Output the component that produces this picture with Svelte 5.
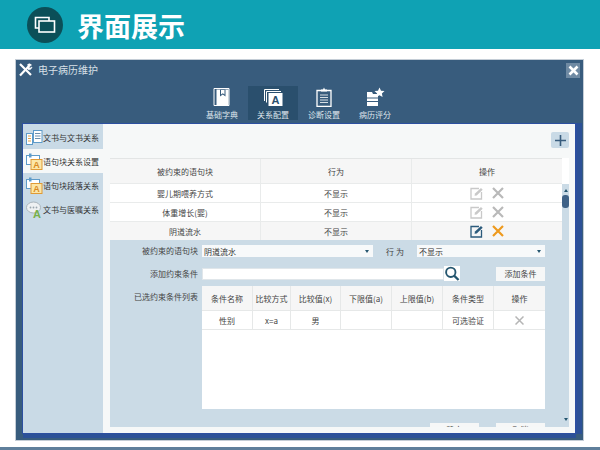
<script>
  const tools = [
    { label: '基础字典', icon: 'book' },
    { label: '关系配置', icon: 'font', active: true },
    { label: '诊断设置', icon: 'clip' },
    { label: '病历评分', icon: 'star' }
  ];
  const sideItems = [
    { label: '文书与文书关系', icon: 'doc' },
    { label: '语句块关系设置', icon: 'block', active: true },
    { label: '语句块段落关系', icon: 'block' },
    { label: '文书与医嘱关系', icon: 'chat' }
  ];
  const rows = [
    { name: '婴儿期喂养方式', action: '不显示' },
    { name: '体重增长(婴)', action: '不显示' },
    { name: '阴道流水', action: '不显示', selected: true }
  ];
  const condHead = ['条件名称', '比较方式', '比较值(x)', '下限值(a)', '上限值(b)', '条件类型', '操作'];
</script>

<div class="page">
  <header class="banner">
    <div class="badge">
      <svg width="22" height="18" viewBox="0 0 22 18" fill="none" stroke="#fff" stroke-width="1.6">
        <path d="M5 12H1.500V1.500H15V5" />
        <rect x="5" y="5" width="15.500" height="11" />
      </svg>
    </div>
    <h1>界面展示</h1>
  </header>

  <section class="window">
    <div class="titlebar">
      <svg class="wrench" width="15" height="15" viewBox="0 0 15 15" fill="none" stroke="#fff">
        <path d="M2 13.500 11 4" stroke-width="2.200" />
        <path d="M9.500 2.500a3 3 0 0 1 4 .500l-2 1.500-.5 1 1 .7 2-1.200a3 3 0 0 1-4 2.500" fill="#fff" stroke-width=".6" />
        <path d="M2 2l11 11" stroke-width="2.200" />
      </svg>
      <span>电子病历维护</span>
      <button class="close" aria-label="关闭">
        <svg width="11" height="11" viewBox="0 0 11 11" stroke="#fff" stroke-width="2.600"><path d="M1.500 1.500l8 8M9.500 1.500l-8 8" /></svg>
      </button>
    </div>

    <nav class="toolbar">
      {#each tools as t}
        <div class="tool" class:active={t.active}>
          <svg width="22" height="20" viewBox="0 0 22 20" fill="none">
            {#if t.icon === 'book'}
              <path d="M3 1.500h15v17H3z" fill="#385c7d" stroke="#fff" />
              <path d="M5.500 2.500h12v15.500h-12z" fill="#fff" />
              <path d="M9 2.500h5.500v7l-2.700-2-2.800 2z" fill="#385c7d" />
              <path d="M10 3h3.500v4.500l-1.700-1.200-1.800 1.200z" fill="#fff" />
            {:else if t.icon === 'font'}
              <path d="M2.500 14V2.500H17" stroke="#fff" />
              <path d="M4.500 15.500V4.500H19" stroke="#fff" />
              <rect x="6.500" y="6" width="14" height="13" fill="#fff" />
              <text x="13.500" y="16.500" class="glyph-a">A</text>
            {:else if t.icon === 'clip'}
              <path d="M4 3.500h14v16H4z" stroke="#fff" stroke-width="1.300" />
              <path d="M8 4.500V2.500h2L11 .5l1 2h2v2z" fill="#fff" />
              <path d="M7 8h8M7 10.500h8M7 13h8M7 15.500h8" stroke="#fff" stroke-width=".8" />
            {:else}
              <path d="M3 5h5l1 2h5v12H3z" fill="#fff" />
              <path d="M3 11h11M3 14.500h11" stroke="#385c7d" />
              <path d="M15.500 .5l1.500 3.200 3.500.4-2.600 2.400.7 3.500-3.100-1.800-3.100 1.800.7-3.500-2.600-2.400 3.500-.4z" fill="#fff" />
            {/if}
          </svg>
          <span>{t.label}</span>
        </div>
      {/each}
    </nav>

    <div class="content">
      <aside class="sidebar">
        {#each sideItems as s}
          <div class="side-item" class:active={s.active}>
            <svg width="17" height="17" viewBox="0 0 17 17">
              {#if s.icon === 'doc'}
                <rect x=".5" y="4.500" width="6" height="11" fill="#fff" stroke="#5e9bc9" />
                <path d="M2 7h3M2 9.500h3M2 12h3" stroke="#e2a24a" />
                <rect x="7.500" y="1.500" width="8.500" height="12" fill="#fff" stroke="#5e9bc9" />
                <path d="M9 4.500h5.500M9 7h5.500M9 9.500h5.500" stroke="#6a8fae" />
              {:else if s.icon === 'block'}
                <rect x=".5" y="2.500" width="13" height="9" fill="#fff" stroke="#5e9bc9" />
                <rect x="3" y=".5" width="2.500" height="4" fill="#5e9bc9" />
                <rect x="5" y="6.500" width="11" height="10" fill="#fbe6a8" stroke="#e09a35" />
                <text x="10.500" y="15" class="glyph-side">A</text>
              {:else}
                <ellipse cx="7.500" cy="6.500" rx="7" ry="5.500" fill="#eef1f3" stroke="#a9b4bc" />
                <circle cx="4.500" cy="6.500" r=".9" fill="#9aa6ae" />
                <circle cx="7.500" cy="6.500" r=".9" fill="#9aa6ae" />
                <circle cx="10.500" cy="6.500" r=".9" fill="#9aa6ae" />
                <text x="11" y="16.500" class="glyph-green">A</text>
              {/if}
            </svg>
            <span>{s.label}</span>
          </div>
        {/each}
      </aside>

      <main class="main">
        <div class="plus-row">
          <button class="plus" aria-label="添加">
            <svg width="11" height="11" viewBox="0 0 11 11" stroke="#385c7d" stroke-width="1.600"><path d="M5.500 0v11M0 5.500h11" /></svg>
          </button>
        </div>

        <div class="scroller">
          <div class="scroll-body">
            <div class="rule-table">
              <div class="rule-row head">
                <div>被约束的语句块</div>
                <div>行为</div>
                <div>操作</div>
              </div>
              {#each rows as r}
                <div class="rule-row" class:selected={r.selected}>
                  <div>{r.name}</div>
                  <div>{r.action}</div>
                  <div class="ops">
                    <svg width="13" height="13" viewBox="0 0 13 13" fill="none" stroke={r.selected ? '#2c5b7c' : '#c9c9c9'}>
                      <path d="M9 1.500H1v10.500h10.500V5" stroke-width="1.300" />
                      <path d="M4.500 8.700l.5-2.200 6-5.500 1.700 1.700-6 5.700z" fill={r.selected ? '#2c5b7c' : '#c9c9c9'} stroke="none" />
                    </svg>
                    <svg width="12" height="12" viewBox="0 0 12 12" stroke={r.selected ? '#ee9a1e' : '#b9b9b9'} stroke-width="2.200">
                      <path d="M1 1l10 10M11 1L1 11" />
                    </svg>
                  </div>
                </div>
              {/each}
            </div>

            <div class="editor">
              <div class="field-row">
                <span class="field-label">被约束的语句块</span>
                <div class="select wide"><span>阴道流水</span><i></i></div>
                <span class="behave-label">行 为</span>
                <div class="select short"><span>不显示</span><i></i></div>
              </div>

              <div class="field-row add-row">
                <span class="field-label">添加约束条件</span>
                <div class="search-input"></div>
                <svg class="search" width="16" height="16" viewBox="0 0 16 16" fill="none" stroke="#25566f">
                  <circle cx="6.700" cy="6.700" r="5" stroke-width="2" />
                  <path d="M10.500 10.500l4.500 4.500" stroke-width="2.400" />
                </svg>
                <button class="btn add">添加条件</button>
              </div>

              <div class="list-row">
                <span class="field-label">已选约束条件列表</span>
                <div class="cond-table">
                  <div class="cond-row cond-head">
                    {#each condHead as h}<div>{h}</div>{/each}
                  </div>
                  <div class="cond-row cond-data">
                    <div>性别</div>
                    <div>x=a</div>
                    <div>男</div>
                    <div></div>
                    <div></div>
                    <div>可选验证</div>
                    <div>
                      <svg width="9" height="9" viewBox="0 0 9 9" stroke="#b5b5b5" stroke-width="1.500"><path d="M.5.500l8 8M8.500.500l-8 8" /></svg>
                    </div>
                  </div>
                </div>
              </div>

              <div class="footer-btns">
                <button class="btn">确定</button>
                <button class="btn">取消</button>
              </div>
            </div>
          </div>

          <div class="scrollbar">
            <span class="arrow up"></span>
            <span class="thumb"></span>
            <span class="arrow down"></span>
          </div>
        </div>
      </main>
    </div>
  </section>

  <div class="next-slide"></div>
</div>

<style>
  :global(body) {
    margin: 0;
    background: #fff;
  }

  .page {
    width: 600px;
    height: 450px;
    overflow: hidden;
    font-family: "Noto Sans CJK SC", "Noto Sans", sans-serif;
    background: #fff;
    display: flex;
    flex-direction: column;
  }

  .banner {
    height: 49px;
    flex: none;
    background: #0fa2b4;
    display: flex;
    align-items: center;
    padding-left: 27px;
    gap: 14px;
    box-sizing: border-box;
  }

  .badge {
    width: 36px;
    height: 36px;
    border-radius: 50%;
    background: #0b4f58;
    display: flex;
    align-items: center;
    justify-content: center;
    margin-top: 1px;
  }

  h1 {
    margin: 0;
    color: #fff;
    font-size: 27px;
    font-weight: 700;
    line-height: 1;
    letter-spacing: 0;
    margin-top: 1px;
  }

  .window {
    margin: 11px 17px 0 16px;
    height: 380px;
    flex: none;
    box-sizing: border-box;
    background: #385c7d;
    box-shadow: 0 0 0 1px #c4cdd6;
    display: flex;
    flex-direction: column;
  }

  .titlebar {
    height: 19px;
    display: flex;
    align-items: center;
    color: #d8e0e7;
    font-size: 10px;
    padding: 0 2px;
    gap: 5px;
  }

  .titlebar .wrench {
    flex: none;
  }

  .close {
    margin-left: auto;
    width: 14px;
    height: 15px;
    margin-top: 1px;
    margin-right: 1px;
    padding: 0;
    border: 0;
    background: #6f8aa3;
    display: flex;
    align-items: center;
    justify-content: center;
  }

  .toolbar {
    height: 40px;
    margin-top: 7px;
    display: flex;
    justify-content: center;
    padding-right: 1px;
    gap: 0;
  }

  .tool {
    width: 50px;
    margin-right: 1px;
    display: flex;
    flex-direction: column;
    align-items: center;
    color: #dfe6ec;
    font-size: 8px;
    line-height: 11px;
    padding-top: 1px;
    box-sizing: border-box;
    gap: 2px;
    height: 34px;
  }

  .tool.active {
    background: #2a4f6d;
  }

  .content {
    margin: -3px 6px 6px 6px;
    flex: 1;
    min-height: 0;
    border: 1px solid #2c4fa0;
    border-width: 1px 2px 1px 1px;
    background: #f6f8f8;
    display: flex;
    box-sizing: border-box;
    box-shadow: 0 5px 0 -1px #2c5197, 5px 0 0 0 #2c5197;
  }

  .sidebar {
    width: 80px;
    flex: none;
    background: #c9dae6;
    display: flex;
    flex-direction: column;
    padding-top: 1px;
    box-sizing: border-box;
  }

  .side-item {
    height: 24px;
    display: flex;
    align-items: center;
    padding-left: 3px;
    gap: 0;
    font-size: 8px;
    color: #333;
    white-space: nowrap;
  }

  .side-item.active {
    background: #f6f8f8;
  }

  .main {
    flex: 1;
    min-width: 0;
    padding-left: 7px;
    padding-right: 6px;
    display: flex;
    flex-direction: column;
    min-height: 0;
  }

  .plus-row {
    height: 34px;
    flex: none;
    display: flex;
    justify-content: flex-end;
    align-items: flex-start;
    padding-top: 8px;
    box-sizing: border-box;
  }

  .plus {
    width: 18px;
    height: 16px;
    padding: 0;
    border: 0;
    border-radius: 2px;
    background: #c9dae6;
    display: flex;
    align-items: center;
    justify-content: center;
  }

  .scroller {
    height: 269px;
    flex: none;
    display: flex;
    overflow: hidden;
    background: #cbdbe6;
  }

  .scroll-body {
    width: 452px;
    flex: none;
    overflow: hidden;
  }

  .scrollbar {
    flex: 1;
    position: relative;
    background: #cbdbe6;
    border-top: 26px solid #fff;
    box-sizing: border-box;
    display: flex;
    flex-direction: column;
    align-items: center;
  }

  .thumb {
    width: 7px;
    height: 13px;
    margin-top: 3px;
    border-radius: 3px;
    background: #3f6287;
  }

  .arrow {
    width: 0;
    height: 0;
    border-left: 2.500px solid transparent;
    border-right: 2.500px solid transparent;
  }

  .arrow.up {
    margin-top: 5px;
    border-bottom: 3px solid #25566f;
  }

  .arrow.down {
    margin-top: auto;
    margin-bottom: 6px;
    border-top: 3px solid #25566f;
  }

  .rule-table {
    background: #fff;
    font-size: 8px;
    color: #444;
  }

  .rule-row {
    display: grid;
    grid-template-columns: 151px 151px 150px;
    height: 19px;
    box-sizing: border-box;
    border-bottom: 1px solid #e9ebeb;
  }

  .rule-row:last-child {
    height: 18px;
    border-bottom: 0;
  }

  .rule-row > div {
    display: flex;
    align-items: center;
    justify-content: center;
    border-right: 1px solid #e9ebeb;
    box-sizing: border-box;
  }

  .rule-row > div:last-child {
    border-right: 0;
  }

  .rule-row.head {
    height: 26px;
    background: #f6f6f6;
    border-top: 1px solid #e3e5e5;
  }

  .rule-row.selected {
    background: #f6f6f6;
  }

  .ops {
    gap: 9px;
  }

  .editor {
    background: #cbdbe6;
    font-size: 8px;
    color: #444;
    height: 190px;
    overflow: hidden;
    padding-top: 5px;
    box-sizing: border-box;
  }

  .field-row {
    display: flex;
    align-items: center;
    height: 12px;
  }

  .field-label {
    width: 88px;
    text-align: right;
    flex: none;
    margin-right: 4px;
    line-height: 12px;
    white-space: nowrap;
  }

  .select {
    height: 12px;
    background: #f7f9fa;
    display: flex;
    align-items: center;
    justify-content: space-between;
    padding: 0 4px 0 2px;
    box-sizing: border-box;
    color: #333;
  }

  .select i {
    width: 0;
    height: 0;
    border-left: 2.500px solid transparent;
    border-right: 2.500px solid transparent;
    border-top: 3px solid #25566f;
  }

  .select.wide {
    width: 171px;
  }

  .select.short {
    width: 128px;
  }

  .behave-label {
    width: 44px;
    text-align: center;
    flex: none;
    white-space: pre;
    padding-left: 0;
  }

  .add-row {
    height: 15px;
    margin-top: 9px;
  }

  .search-input {
    width: 242px;
    height: 12px;
    background: #fff;
    border: 1px solid #e0e6ea;
    box-sizing: border-box;
  }

  .search {
    flex: none;
    background: #fff;
    height: 15px;
    margin-right: 36px;
  }

  .btn {
    width: 49px;
    height: 14px;
    padding: 0;
    border: 0;
    background: #f6f7f7;
    font-family: inherit;
    font-size: 8px;
    line-height: 14px;
    color: #444;
  }

  .list-row {
    display: flex;
    align-items: flex-start;
    margin-top: 5px;
  }

  .list-row .field-label {
    margin-top: 5px;
  }

  .cond-table {
    width: 343px;
    height: 123px;
    background: #fff;
    flex: none;
  }

  .cond-row {
    display: grid;
    grid-template-columns: 51px 38px 50px 51px 51px 51px 51px;
    box-sizing: border-box;
    border-bottom: 1px solid #e6e8e8;
  }

  .cond-row > div {
    display: flex;
    align-items: center;
    justify-content: center;
    border-right: 1px solid #e6e8e8;
    box-sizing: border-box;
    white-space: nowrap;
  }

  .cond-row > div:last-child {
    border-right: 0;
  }

  .cond-head {
    height: 25px;
    background: #f6f6f6;
  }

  .cond-data {
    height: 19px;
  }

  .footer-btns {
    display: flex;
    justify-content: flex-end;
    gap: 17px;
    margin-top: 14px;
    margin-right: 17px;
  }

  .next-slide {
    margin-top: 7px;
    height: 4px;
    flex: none;
    background: #5f7f9b;
  }

  .glyph-a {
    font-family: "Liberation Sans", sans-serif;
    font-size: 11px;
    font-weight: 700;
    fill: #2a4f6d;
    text-anchor: middle;
  }

  .glyph-side {
    font-family: "Liberation Sans", sans-serif;
    font-size: 9px;
    font-weight: 700;
    fill: #d98a1f;
    text-anchor: middle;
  }

  .glyph-green {
    font-family: "Liberation Sans", sans-serif;
    font-size: 11px;
    font-weight: 700;
    fill: #77b04a;
    text-anchor: middle;
  }
</style>
